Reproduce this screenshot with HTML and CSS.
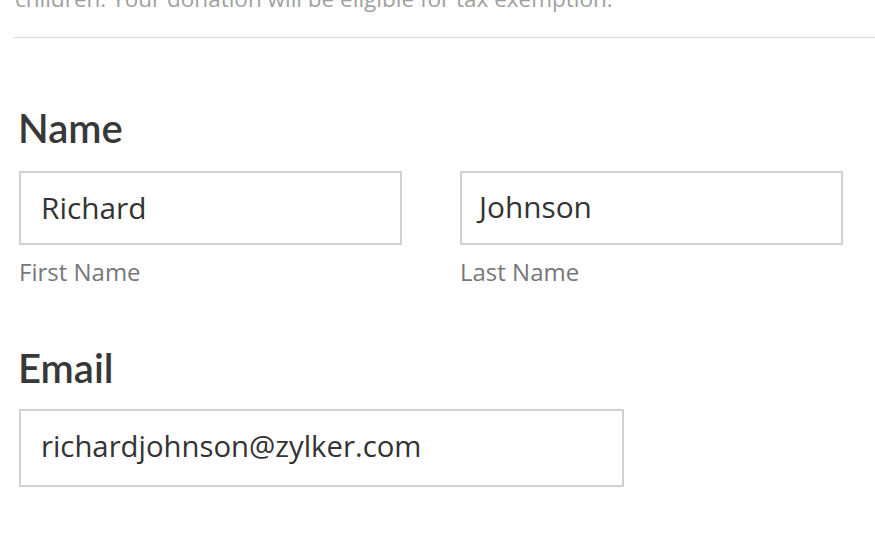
FILE: index.html
```html
<!DOCTYPE html>
<html lang="en">
<head>
<meta charset="utf-8">
<title>Donation form</title>
<link rel="stylesheet" href="styles.css">
</head>
<body>
<div class="page">
  <p class="intro">children. Your donation will be eligible for tax exemption.</p>
  <hr class="divider">
  <form class="form">
    <section class="field">
      <h2 class="field-title">Name</h2>
      <div class="name-row">
        <div class="sub">
          <div class="box">Richard</div>
          <div class="sub-label">First Name</div>
        </div>
        <div class="sub">
          <div class="box box-alt">Johnson</div>
          <div class="sub-label">Last Name</div>
        </div>
      </div>
    </section>
    <section class="field field-email">
      <h2 class="field-title">Email</h2>
      <div class="box box-email">richardjohnson@zylker.com</div>
    </section>
  </form>
</div>
</body>
</html>
```

FILE: styles.css
```css
html, body {
  margin: 0;
  padding: 0;
  background: #ffffff;
}
body {
  font-family: "Open Sans", "Lato", sans-serif;
  color: #333333;
  overflow: hidden;
}
.page {
  padding-left: 14px;
}
.intro {
  margin: -14px 0 0 1px;
  font-size: 22.5px;
  line-height: 26px;
  color: #a0a0a0;
  white-space: nowrap;
}
.divider {
  margin: 25px 0 0 0;
  border: 0;
  border-top: 1px solid #dcdcdc;
  height: 0;
}
.form {
  padding-left: 4px;
  padding-top: 66px;
}
.field-title {
  margin: 0;
  font-family: "Lato", "Open Sans", sans-serif;
  font-size: 40px;
  line-height: 48px;
  font-weight: 600;
  color: #383838;
}
.name-row {
  display: flex;
  gap: 58px;
  margin-top: 19px;
  padding-left: 1px;
}
.sub {
  width: 383px;
}
.box {
  box-sizing: border-box;
  height: 74px;
  border: 2px solid #d2d2d2;
  padding: 0 20px;
  font-size: 29.8px;
  line-height: 69px;
  color: #333333;
}
.box-alt {
  padding-left: 17px;
  line-height: 67px;
}
.sub-label {
  margin-top: 12px;
  font-size: 24px;
  line-height: 30px;
  color: #777777;
}
.field-email {
  margin-top: 57px;
}
.box-email {
  width: 605px;
  height: 78px;
  line-height: 70px;
  font-size: 29.3px;
  margin-top: 17px;
  margin-left: 1px;
}
```
